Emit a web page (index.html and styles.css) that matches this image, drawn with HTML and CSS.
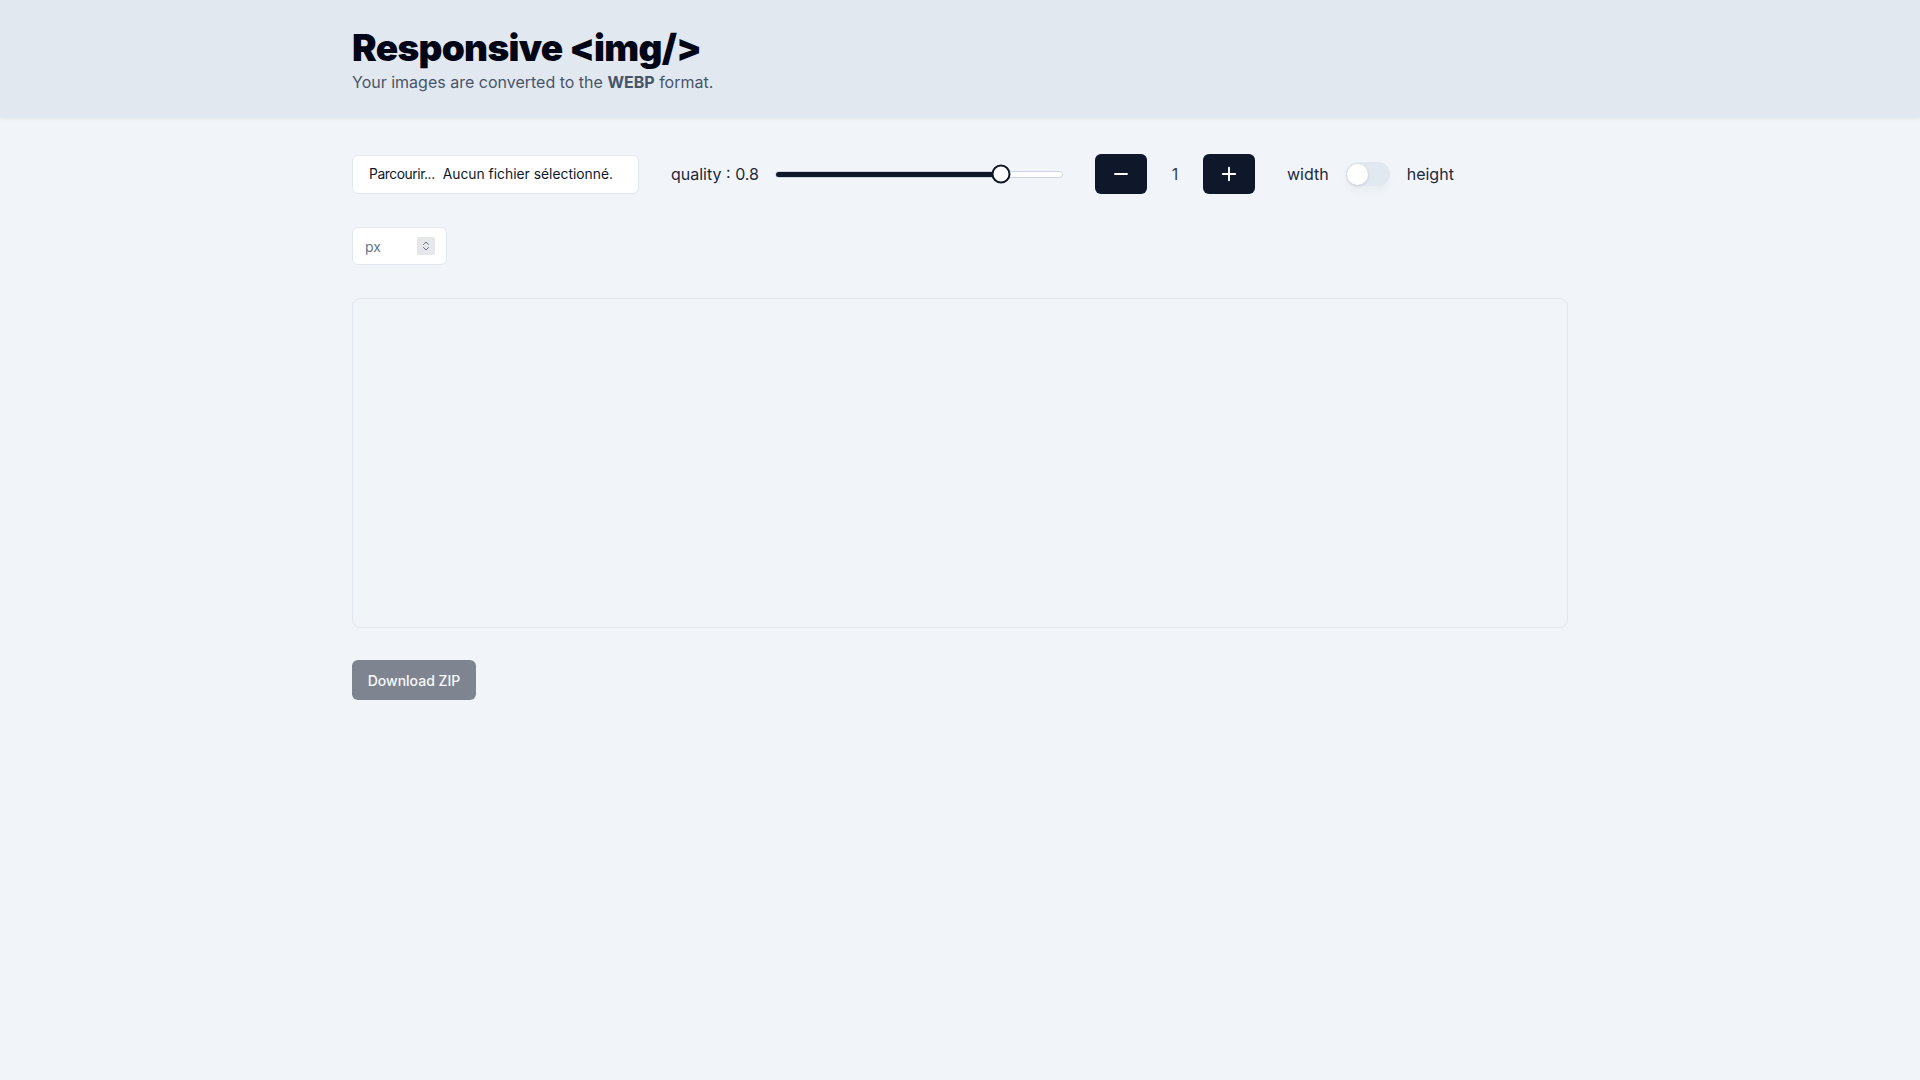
FILE: index.html
```html
<!DOCTYPE html>
<html lang="fr">
<head>
<meta charset="utf-8">
<title>Responsive img</title>
<link rel="stylesheet" href="styles.css">
</head>
<body>
<header class="header">
  <div class="container">
    <h1 class="title">Responsive &lt;img/&gt;</h1>
    <p class="subtitle">Your images are converted to the <strong>WEBP</strong> format.</p>
  </div>
</header>
<main class="container main">
  <div class="controls">
    <div class="file-input"><span class="file-btn">Parcourir...</span><span class="file-name">Aucun fichier sélectionné.</span></div>
    <div class="quality">
      <span class="label">quality : 0.8</span>
      <div class="range">
        <div class="range-track"><div class="range-fill" style="width:80%"></div></div>
        <div class="range-thumb" style="left:80%"></div>
      </div>
    </div>
    <div class="counter">
      <button class="btn-square" type="button" aria-label="decrease">
        <svg width="16" height="16" viewBox="0 0 16 16"><path d="M2 8h12" stroke="#fff" stroke-width="1.9" stroke-linecap="round"/></svg>
      </button>
      <span class="count">1</span>
      <button class="btn-square" type="button" aria-label="increase">
        <svg width="16" height="16" viewBox="0 0 16 16"><path d="M1.8 8h12.4M8 1.8v12.4" stroke="#fff" stroke-width="1.9" stroke-linecap="round"/></svg>
      </button>
    </div>
    <div class="switch-group">
      <span class="label">width</span>
      <div class="switch"><div class="switch-knob"></div></div>
      <span class="label">height</span>
    </div>
  </div>
  <div class="controls">
    <div class="num-input">
      <span class="placeholder">px</span>
      <span class="spin">
        <svg width="8" height="12" viewBox="0 0 8 12"><path d="M1.5 4.5L4 2l2.5 2.5M1.5 7.5L4 10l2.5-2.5" fill="none" stroke="#6b7280" stroke-width="1" stroke-linecap="round" stroke-linejoin="round"/></svg>
      </span>
    </div>
  </div>
  <div class="dropzone"></div>
  <div>
    <button class="btn-download" type="button" disabled>Download ZIP</button>
  </div>
</main>
</body>
</html>
```
FILE: styles.css
```css
* { box-sizing: border-box; }
html, body { margin: 0; padding: 0; }
body {
  background: #f1f5f9;
  font-family: Inter, "Noto Sans", sans-serif;
  color: #0f172a;
  min-height: 1080px;
}
.container {
  width: 1216px;
  margin: 0 auto;
}
.header {
  background: #e2e8f0;
  height: 118px;
  box-shadow: 0 1px 4px rgba(15, 23, 42, 0.06);
}
.header .container {
  padding-top: 26px;
}
.title {
  margin: 0;
  font-size: 37px;
  line-height: 44px;
  font-weight: 900;
  color: #020617;
  letter-spacing: -0.7px;
}
.subtitle {
  margin: 0;
  font-size: 16px;
  line-height: 24px;
  color: #475569;
}
.subtitle strong { font-weight: 700; }
.main {
  padding-top: 36px;
  display: flex;
  flex-direction: column;
  gap: 32px;
}
.controls {
  display: flex;
  align-items: center;
  gap: 32px;
  height: 40px;
}
.file-input {
  width: 287px;
  height: 39px;
  background: #fff;
  border: 1px solid #e2e8f0;
  border-radius: 6px;
  display: flex;
  align-items: center;
  padding-left: 16px;
  font-size: 13.85px;
  color: #0f172a;
  gap: 8px;
}
.file-btn { letter-spacing: -0.45px; }
.label {
  font-size: 16px;
  color: #1e293b;
}
.quality {
  display: flex;
  align-items: center;
  gap: 16px;
}
.range {
  position: relative;
  width: 288px;
  height: 20px;
  display: flex;
  align-items: center;
}
.range-track {
  width: 100%;
  height: 7px;
  background: #fff;
  border: 1px solid #cbd5e1;
  border-radius: 4px;
  overflow: hidden;
}
.range-fill {
  height: 100%;
  background: #0f172a;
}
.range-thumb {
  position: absolute;
  top: 50%;
  width: 19px;
  height: 19px;
  margin-left: -4px;
  transform: translate(-50%, -50%);
  background: #fff;
  border: 2.5px solid #0f172a;
  border-radius: 50%;
}
.counter {
  display: flex;
  align-items: center;
  gap: 24px;
}
.btn-square {
  width: 52px;
  height: 40px;
  border: none;
  border-radius: 6px;
  background: #0f172a;
  display: flex;
  align-items: center;
  justify-content: center;
  padding: 0;
}
.count {
  font-size: 16px;
  color: #334155;
  width: 8px;
  text-align: center;
}
.switch-group {
  display: flex;
  align-items: center;
  gap: 17px;
}
.switch {
  width: 44px;
  height: 24px;
  border-radius: 12px;
  background: #e2e8f0;
  padding: 1.5px;
  box-shadow: 0 6px 10px rgba(15, 23, 42, 0.03);
}
.switch-knob {
  width: 21px;
  height: 21px;
  background: #fff;
  border-radius: 50%;
  box-shadow: 0 1px 3px rgba(15, 23, 42, 0.15);
}
.num-input {
  width: 95px;
  height: 38px;
  background: #fff;
  border: 1px solid #e2e8f0;
  border-radius: 6px;
  display: flex;
  align-items: center;
  justify-content: space-between;
  padding: 0 11px 0 12px;
  font-size: 14px;
}
.placeholder { color: #64748b; }
.spin {
  width: 18px;
  height: 18px;
  background: #e5e7eb;
  border-radius: 2px;
  display: flex;
  align-items: center;
  justify-content: center;
}
.dropzone {
  height: 330px;
  border: 1px solid #e2e8f0;
  border-radius: 8px;
}
.btn-download {
  width: 124px;
  height: 40px;
  border: none;
  border-radius: 6px;
  background: #0f172a;
  opacity: 0.5;
  color: #fff;
  font-family: Inter, sans-serif;
  font-size: 14px;
  font-weight: 500;
  padding: 0;
  white-space: nowrap;
  text-align: center;
}
```
